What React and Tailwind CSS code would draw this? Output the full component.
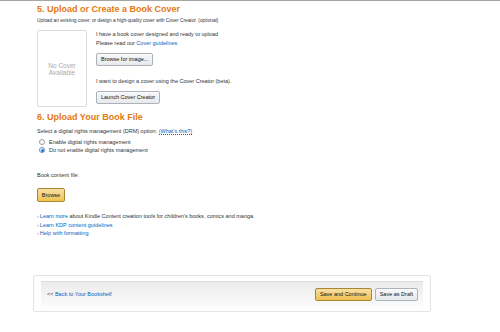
import React from 'react';

const linkCls = 'text-[#0066c0]';
const grayBtn =
  'h-[13px] px-[4px] rounded-[2px] border border-[#adb1b8] bg-gradient-to-b from-[#f7f8fa] to-[#e7e9ec] text-[5.5px] leading-[11px] text-[#111] shadow-[0_1px_0_rgba(255,255,255,0.6)_inset]';
const yellowBtn =
  'rounded-[2px] border border-[#a88734] bg-gradient-to-b from-[#f7dfa5] to-[#f0c14b] text-[5.5px] text-[#111]';

const Radio = ({ checked, label }) => (
  <div className="flex items-center h-[8px]">
    <span
      className={`w-[6px] h-[6px] rounded-full border bg-white flex items-center justify-center ml-[2px] mr-[4px] ${
        checked ? 'border-[#5b8fd6]' : 'border-[#9a9a9a]'
      }`}
    >
      {checked && <span className="w-[3px] h-[3px] rounded-full bg-[#2a6fd6]" />}
    </span>
    <span>{label}</span>
  </div>
);

const App = () => {
  return (
    <div
      className="w-[500px] h-[332px] bg-white text-[#333] text-[5.5px] leading-[7px] overflow-hidden"
      style={{ fontFamily: '"Liberation Sans", Arial, sans-serif' }}
    >
      {/* edge of the previous block */}
      <div className="h-px bg-[#a5a5a5]" />

      <div className="pl-[37px]">
        {/* 5. cover */}
        <h2 className="mt-[3px] h-[11px] text-[9px] leading-[11px] font-bold text-[#e47911]">
          5. Upload or Create a Book Cover
        </h2>
        <p className="mt-[2px] h-[7px] text-[4.8px]">
          Upload an existing cover, or design a high-quality cover with Cover Creator. (optional)
        </p>

        <div className="flex mt-[6px]">
          <div className="w-[50px] h-[77px] border border-[#dcdcdc] rounded-[2px] flex items-center justify-center text-center text-[#aaa] text-[6.5px] leading-[7px]">
            No Cover<br />Available
          </div>
          <div className="ml-[9px] leading-[9px]">
            <p>I have a book cover designed and ready to upload</p>
            <p>
              Please read our <span className={linkCls}>Cover guidelines</span>
            </p>
            <button className={`${grayBtn} mt-[5px] block`}>Browse for image...</button>
            <p className="mt-[11px]">I want to design a cover using the Cover Creator (beta).</p>
            <button className={`${grayBtn} mt-[5px] block`}>Launch Cover Creator</button>
          </div>
        </div>

        {/* 6. book file */}
        <h2 className="mt-[5px] h-[11px] text-[9px] leading-[11px] font-bold text-[#e47911]">
          6. Upload Your Book File
        </h2>
        <p className="mt-[4px] h-[8px] leading-[8px]">
          Select a digital rights management (DRM) option:{' '}
          <span className={`${linkCls} border-b border-dotted border-[#0066c0]`}>(What's this?)</span>
        </p>
        <div className="mt-[3px]">
          <Radio label="Enable digital rights management" />
          <Radio checked label="Do not enable digital rights management" />
        </div>

        <p className="mt-[17px] h-[8px] leading-[8px]">Book content file:</p>
        <button className={`${yellowBtn} mt-[9px] block w-[28px] h-[14px] leading-[12px]`}>Browse</button>

        <ul className="mt-[10px] leading-[8.5px]">
          <li>
            <span className="text-[#e47911] mr-[1px]">›</span>
            <span className={linkCls}>Learn more</span> about Kindle Content creation tools for children's books, comics and manga.
          </li>
          <li>
            <span className="text-[#e47911] mr-[1px]">›</span>
            <span className={linkCls}>Learn KDP content guidelines</span>
          </li>
          <li>
            <span className="text-[#e47911] mr-[1px]">›</span>
            <span className={linkCls}>Help with formatting</span>
          </li>
        </ul>
      </div>

      {/* footer bar */}
      <div className="ml-[33px] mt-[37px] w-[398px] h-[37px] border border-[#e3e3e3] rounded-[2px] px-[7px] pt-[5px]">
        <div className="h-[26px] bg-gradient-to-b from-[#ebebeb] to-[#fbfbfb] border-t border-[#dedede] flex items-center justify-between pl-[6px] pr-[5px]">
          <span>
            &lt;&lt; <span className={linkCls}>Back to Your Bookshelf</span>
          </span>
          <div className="flex gap-[3px]">
            <button className={`${yellowBtn} h-[13px] px-[4px] leading-[11px]`}>Save and Continue</button>
            <button className={grayBtn}>Save as Draft</button>
          </div>
        </div>
      </div>
    </div>
  );
};

export default App;
